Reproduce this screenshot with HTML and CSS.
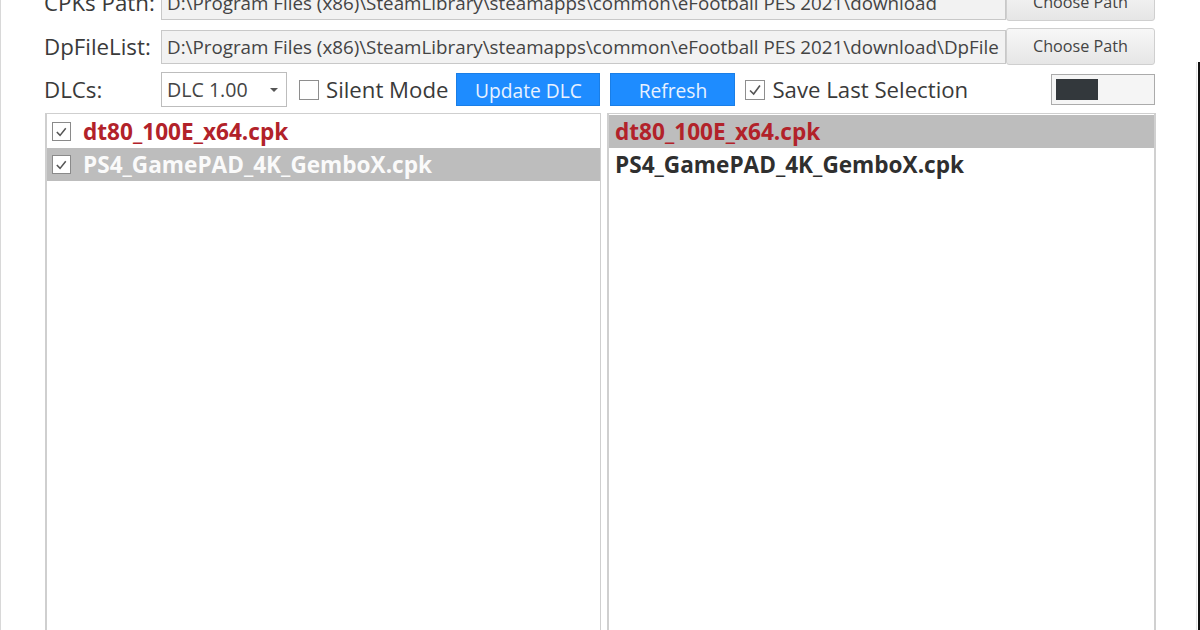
FILE: index.html
```html
<!DOCTYPE html>
<html>
<head>
<meta charset="utf-8">
<link rel="stylesheet" href="styles.css">
</head>
<body>
<div class="window">
  <div class="form">
    <div class="row row-path first">
      <div class="label">CPKs Path:</div>
      <div class="field">D:\Program Files (x86)\SteamLibrary\steamapps\common\eFootball PES 2021\download</div>
      <div class="btn">Choose Path</div>
    </div>
    <div class="row row-path">
      <div class="label">DpFileList:</div>
      <div class="field">D:\Program Files (x86)\SteamLibrary\steamapps\common\eFootball PES 2021\download\DpFile</div>
      <div class="btn">Choose Path</div>
    </div>
    <div class="row row-dlc">
      <div class="label">DLCs:</div>
      <div class="combo"><span>DLC 1.00</span><span class="arrow"></span></div>
      <label class="check"><span class="box"></span><span>Silent Mode</span></label>
      <div class="blue update">Update DLC</div>
      <div class="blue refresh">Refresh</div>
      <label class="check save"><span class="box checked"><svg viewBox="0 0 20 20" width="20" height="20"><path d="M4.5 10.5 L8.5 14.5 L15.5 5" fill="none" stroke="#555" stroke-width="1.8"/></svg></span><span>Save Last Selection</span></label>
      <div class="toggle"><span class="knob"></span></div>
    </div>
    <div class="lists">
      <div class="list left">
        <div class="item red"><span class="box small checked"><svg viewBox="0 0 20 20" width="18" height="18"><path d="M4.5 10 L8.3 14 L15 5.5" fill="none" stroke="#555" stroke-width="1.8"/></svg></span><span>dt80_100E_x64.cpk</span></div>
        <div class="item sel white"><span class="box small checked"><svg viewBox="0 0 20 20" width="18" height="18"><path d="M4.5 10 L8.3 14 L15 5.5" fill="none" stroke="#555" stroke-width="1.8"/></svg></span><span>PS4_GamePAD_4K_GemboX.cpk</span></div>
      </div>
      <div class="list right">
        <div class="item sel red">dt80_100E_x64.cpk</div>
        <div class="item dark">PS4_GamePAD_4K_GemboX.cpk</div>
      </div>
    </div>
  </div>
  <div class="edge"></div>
</div>
</body>
</html>
```

FILE: styles.css
```css
html, body {
  margin: 0;
  padding: 0;
  width: 1200px;
  height: 630px;
  overflow: hidden;
  background: #fff;
}
body {
  font-family: "Open Sans", "Noto Sans", sans-serif;
  color: #3c3c3c;
}
.window {
  display: flex;
  width: 1200px;
  height: 630px;
  border-left: 1px solid #d8d8d8;
  box-sizing: border-box;
}
.form {
  width: 1155px;
  padding-left: 43px;
  box-sizing: border-box;
  display: flex;
  flex-direction: column;
}
.row {
  display: flex;
  align-items: center;
}
.row-path {
  height: 37px;
  margin-bottom: 7px;
}
.row-path.first {
  margin-top: -16px;
}
.label {
  width: 117px;
  font-size: 22.3px;
  color: #3a3a3a;
  flex: none;
}
.field {
  width: 845px;
  height: 34px;
  box-sizing: border-box;
  background: #f2f2f2;
  border: 1px solid #c8c8c8;
  font-size: 18.8px;
  line-height: 32px;
  padding-left: 5px;
  white-space: nowrap;
  overflow: hidden;
  color: #444;
  flex: none;
}
.btn {
  width: 149px;
  height: 37px;
  box-sizing: border-box;
  border: 1px solid #cfcfcf;
  border-radius: 3px;
  background: linear-gradient(#f7f7f7, #e6e6e6);
  font-size: 16.2px;
  text-align: center;
  line-height: 35px;
  color: #444;
  flex: none;
}
.row-dlc {
  height: 36px;
  margin-bottom: 6px;
}
.combo {
  width: 126px;
  height: 35px;
  box-sizing: border-box;
  border: 1px solid #bdbdbd;
  background: #fff;
  display: flex;
  align-items: center;
  justify-content: space-between;
  padding: 0 8px 0 5px;
  font-size: 19.6px;
  color: #444;
  flex: none;
}
.arrow {
  width: 0;
  height: 0;
  border-left: 4px solid transparent;
  border-right: 4px solid transparent;
  border-top: 4px solid #555;
}
.check {
  display: flex;
  align-items: center;
  font-size: 22.2px;
  color: #3a3a3a;
  margin-left: 12px;
  flex: none;
}
.box {
  width: 20px;
  height: 20px;
  box-sizing: border-box;
  border: 1px solid #8e8e8e;
  background: #fff;
  margin-right: 7px;
  display: flex;
  align-items: center;
  justify-content: center;
  flex: none;
}
.box svg { display: block; }
.save { margin-left: 10px; }
.blue {
  height: 33px;
  box-sizing: border-box;
  background: #1e8cff;
  border: 1px solid #1a7ee6;
  color: #e8f2ff;
  font-size: 19.2px;
  text-align: center;
  line-height: 33px;
  flex: none;
}
.update { width: 144px; margin-left: 8px; }
.refresh { width: 125px; margin-left: 10px; }
.toggle {
  width: 104px;
  height: 31px;
  box-sizing: border-box;
  border: 1px solid #ababab;
  background: #f5f5f5;
  margin-left: auto;
  margin-right: 1px;
  margin-top: -1px;
  padding: 4px;
  flex: none;
}
.knob {
  display: block;
  width: 42px;
  height: 21px;
  background: #33383c;
}
.lists {
  display: flex;
  gap: 6px;
  flex: 1;
  margin-left: 1px;
}
.list {
  height: 530px;
  box-sizing: border-box;
  border: 1px solid #cfcfcf;
  border-left: 2px solid #cfcfcf;
  padding-top: 1px;
  background: #fff;
}
.list.left { width: 556px; }
.list.right { width: 549px; border-right: 2px solid #d0d0d0; }
.item {
  height: 33px;
  display: flex;
  align-items: center;
  font-weight: bold;
  font-size: 22.6px;
  padding-left: 6px;
  white-space: nowrap;
}
.left .item { padding-left: 5px; }
.box.small {
  width: 19px;
  height: 19px;
  margin-right: 12px;
  border-color: #8a8a8a;
}
.sel { background: #bdbdbd; }
.red { color: #b2222a; }
.white { color: #fafafa; }
.dark { color: #2f2f2f; }
.edge {
  margin-left: auto;
  margin-top: 62px;
  width: 4px;
  border-left: 1px solid #e6e6e6;
  border-right: 2px solid #111;
  box-sizing: border-box;
  height: 568px;
}
```
